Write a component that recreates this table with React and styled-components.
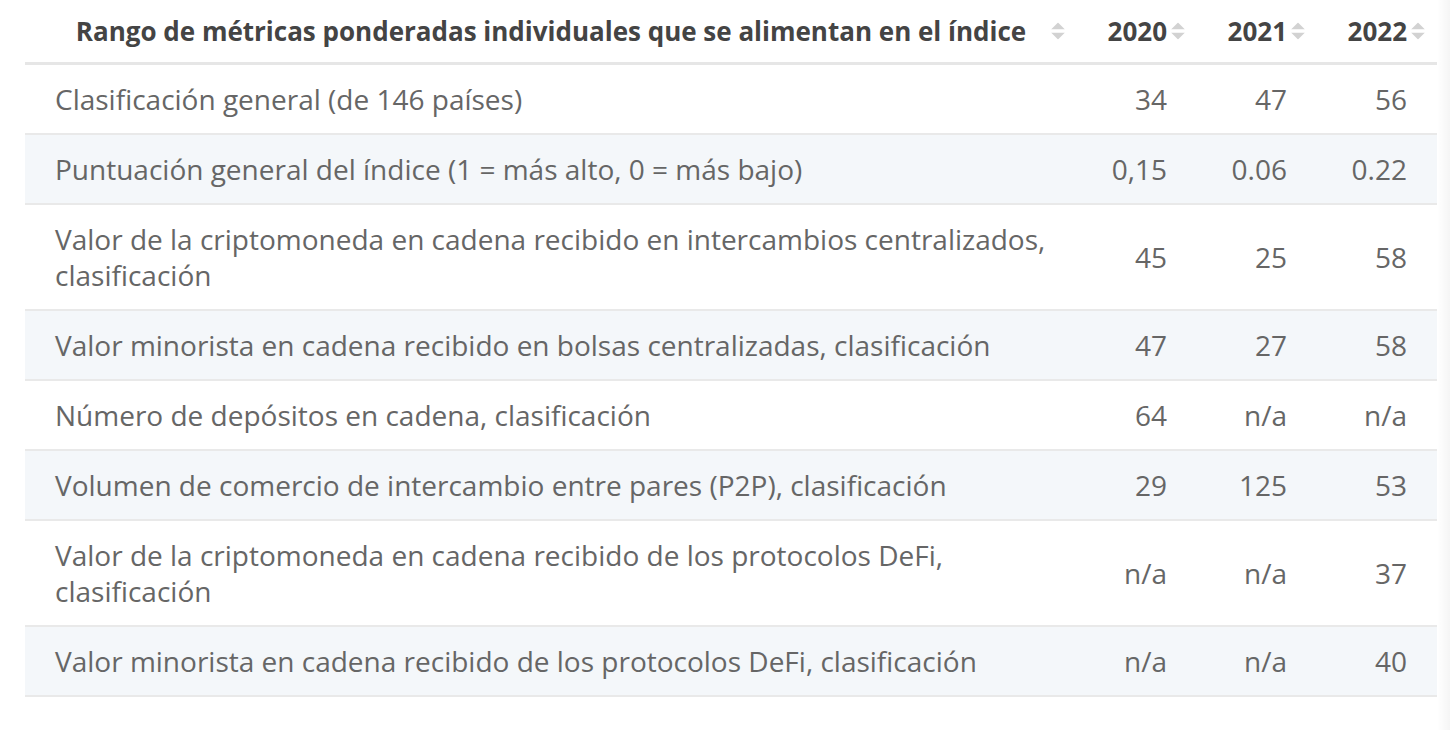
import styled, { createGlobalStyle } from "styled-components";

const GlobalStyle = createGlobalStyle`
  body {
    margin: 0;
    background: #ffffff;
    font-family: "Open Sans", "Noto Sans", sans-serif;
  }
`;

const Page = styled.div`
  position: relative;
  padding: 0 13px 0 25px;
  width: 1450px;
  height: 730px;
  box-sizing: border-box;
  overflow: hidden;
`;

// faint scroll shadow on the right edge
const EdgeShadow = styled.div`
  position: absolute;
  top: 0;
  right: 0;
  width: 13px;
  height: 100%;
  background: linear-gradient(to right, rgba(0, 0, 0, 0), rgba(0, 0, 0, 0.04));
`;

const Table = styled.table`
  width: 1412px;
  border-collapse: collapse;
  table-layout: fixed;
`;

const HeadCell = styled.th`
  height: 62px;
  padding: 0 30px;
  font-size: 26px;
  font-weight: 700;
  color: #444444;
  text-align: ${(p) => (p.$first ? "center" : "right")};
  border-bottom: 3px solid #e6e6e6;
  position: relative;
  white-space: nowrap;
`;

const SortIcon = styled.span`
  position: absolute;
  top: 50%;
  right: ${(p) => (p.$first ? "10px" : "12px")};
  transform: translateY(-50%);
  display: flex;
  flex-direction: column;
  gap: 3px;
`;

const Row = styled.tr`
  background: ${(p) => (p.$striped ? "#f4f7fa" : "#ffffff")};
  border-bottom: 2px solid #e9e9e9;
`;

const Cell = styled.td`
  padding: 16px 30px;
  font-size: 28px;
  line-height: 36px;
  color: #666666;
  text-align: ${(p) => (p.$label ? "left" : "right")};
  vertical-align: middle;
`;

const Arrows = () => (
  <SortIcon>
    <svg width="14" height="7" viewBox="0 0 14 7">
      <path d="M7 0 L14 7 L0 7 Z" fill="#d2d2d2" />
    </svg>
    <svg width="14" height="7" viewBox="0 0 14 7">
      <path d="M0 0 L14 0 L7 7 Z" fill="#d2d2d2" />
    </svg>
  </SortIcon>
);

const rows = [
  ["Clasificación general (de 146 países)", "34", "47", "56"],
  ["Puntuación general del índice (1 = más alto, 0 = más bajo)", "0,15", "0.06", "0.22"],
  ["Valor de la criptomoneda en cadena recibido en intercambios centralizados, clasificación", "45", "25", "58"],
  ["Valor minorista en cadena recibido en bolsas centralizadas, clasificación", "47", "27", "58"],
  ["Número de depósitos en cadena, clasificación", "64", "n/a", "n/a"],
  ["Volumen de comercio de intercambio entre pares (P2P), clasificación", "29", "125", "53"],
  ["Valor de la criptomoneda en cadena recibido de los protocolos DeFi, clasificación", "n/a", "n/a", "37"],
  ["Valor minorista en cadena recibido de los protocolos DeFi, clasificación", "n/a", "n/a", "40"],
];

export default function App() {
  return (
    <Page>
      <GlobalStyle />
      <Table>
        <colgroup>
          <col style={{ width: "1052px" }} />
          <col style={{ width: "120px" }} />
          <col style={{ width: "120px" }} />
          <col style={{ width: "120px" }} />
        </colgroup>
        <thead>
          <tr>
            <HeadCell $first>
              Rango de métricas ponderadas individuales que se alimentan en el índice
              <Arrows />
            </HeadCell>
            {["2020", "2021", "2022"].map((y) => (
              <HeadCell key={y}>
                {y}
                <Arrows />
              </HeadCell>
            ))}
          </tr>
        </thead>
        <tbody>
          {rows.map((r, i) => (
            <Row key={i} $striped={i % 2 === 1}>
              <Cell $label>{r[0]}</Cell>
              <Cell>{r[1]}</Cell>
              <Cell>{r[2]}</Cell>
              <Cell>{r[3]}</Cell>
            </Row>
          ))}
        </tbody>
      </Table>
      <EdgeShadow />
    </Page>
  );
}
